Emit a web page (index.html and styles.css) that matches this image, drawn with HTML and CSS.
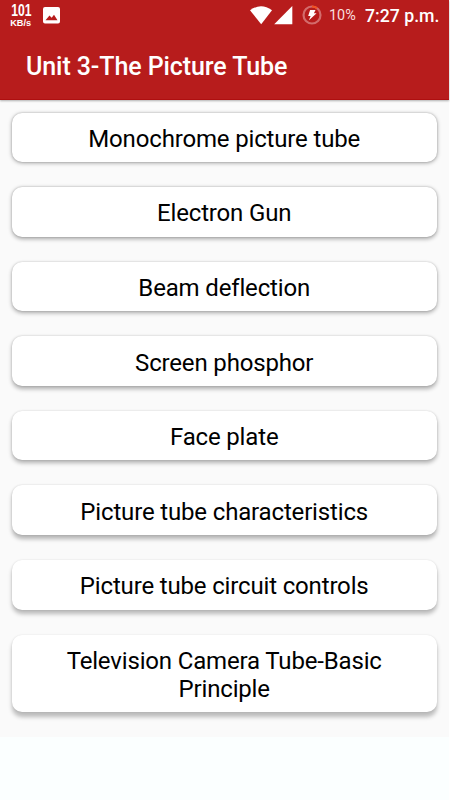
FILE: index.html
```html
<!DOCTYPE html>
<html lang="en">
  <head>
    <meta charset="utf-8">
    <meta name="viewport" content="width=device-width, initial-scale=1.0">
    <title>Unit 3-The Picture Tube</title>
    <link rel="stylesheet" href="styles.css">
  </head>

  <body>
    <div class="screen">
      <header class="header">
        <div class="status">
          <div class="speed"><b>101</b><span>KB/s</span></div>
          <svg class="photo" width="17" height="17" viewBox="0 0 17 17">
            <path fill="#fff" fill-rule="evenodd" d="M2 0h13a2 2 0 0 1 2 2v12.500a2 2 0 0 1-2 2H2a2 2 0 0 1-2-2V2a2 2 0 0 1 2-2zM2.500 13.200h12L11 7.800l-2.300 3-1-1-1.200-1.200z"/>
          </svg>
          <svg class="signal" width="44" height="20" viewBox="0 0 44 20">
            <path fill="#fff" d="M0 4.200Q11 -3.600 22 4.200L11.200 18.200z"/>
            <path fill="#fff" d="M42.300 0v18.200H24.200z"/>
          </svg>
          <svg class="battery" width="20" height="20" viewBox="0 0 20 20">
            <circle cx="10" cy="10" r="8.500" fill="none" stroke="#d36c6c" stroke-width="2.200"/>
            <path d="M10 1.500A8.500 8.500 0 0 1 15 3.100" fill="none" stroke="#f4511e" stroke-width="2.200"/>
            <path fill="#fff" d="M8.100 5h5.400l-1.600 3.300h2.700L7 15.300l1.600-4.200H6.200z"/>
          </svg>
          <span class="percent">10%</span>
          <span class="time">7:27 p.m.</span>
        </div>
        <h1 class="title">Unit 3-The Picture Tube</h1>
      </header>

      <main class="list">
        <button type="button" class="card s1">Monochrome picture tube</button>
        <button type="button" class="card s2">Electron Gun</button>
        <button type="button" class="card s3">Beam deflection</button>
        <button type="button" class="card s4">Screen phosphor</button>
        <button type="button" class="card s5">Face plate</button>
        <button type="button" class="card s6">Picture tube characteristics</button>
        <button type="button" class="card s7">Picture tube circuit controls</button>
        <button type="button" class="card tall s8">Television Camera Tube-Basic Principle</button>
      </main>
    </div>
  </body>
</html>
```

FILE: styles.css
```css
* {
  box-sizing: border-box;
}

body {
  margin: 0;
  background: #fff;
  font-family: Roboto, sans-serif;
}

.screen {
  width: 449px;
  height: 800px;
  background: #fbffff;
}

.header {
  position: relative;
  height: 100px;
  background: #b71c1c;
  color: #fff;
  border-bottom: 1px solid #ae0f10;
  box-shadow: 0 1px 2px rgba(0,0,0,0.3);
}

.status {
  display: flex;
  height: 32px;
}

.speed {
  display: flex;
  flex-direction: column;
  align-items: center;
  width: 22px;
  margin: 3px 0 0 10px;
  font-family: "Liberation Sans", sans-serif;
  font-weight: bold;
}

.speed b {
  font-size: 16px;
  line-height: 16px;
  transform: scaleX(0.76);
}

.speed span {
  margin-top: 1px;
  font-size: 8.500px;
  line-height: 7px;
  transform: scaleX(1.080);
}

.photo {
  margin: 7px 0 0 11px;
}

.signal {
  margin: 6px 0 0 190px;
}

.battery {
  margin: 5px 0 0 8px;
}

.percent {
  width: 28px;
  margin: 6px 0 0 7px;
  font-size: 14.400px;
  line-height: 20px;
  color: #f8dede;
}

.time {
  margin: 5px 0 0 8px;
  font-size: 17.700px;
  line-height: 22px;
  font-weight: 500;
  white-space: nowrap;
}

.title {
  margin: 19px 0 0 26px;
  font-size: 25px;
  line-height: 32px;
  font-weight: 500;
  letter-spacing: -0.090px;
}

.list {
  display: flex;
  flex-direction: column;
  gap: 25px;
  height: 637px;
  padding: 12.500px 12.300px 0 11.700px;
  background: #fafafa;
}

.card {
  height: 49.600px;
  padding: 3px 28px 0;
  border: none;
  border-radius: 10px;
  background: #fff;
  color: #000;
  font-family: Roboto, sans-serif;
  font-size: 24px;
  line-height: 28px;
  letter-spacing: -0.160px;
  font-variant-ligatures: common-ligatures;
  text-align: center;
  cursor: pointer;
}

.tall {
  height: 77.600px;
}

/* the shadow drops further the lower the card is */
.s1 { box-shadow: 0 1px 4px rgba(0,0,0,0.35), 0 0 2px rgba(0,0,0,0.2); }
.s2 { box-shadow: 0 1.500px 4px rgba(0,0,0,0.33), 0 0 2px rgba(0,0,0,0.2); }
.s3 { box-shadow: 0 2px 4px rgba(0,0,0,0.32), 0 0 2px rgba(0,0,0,0.18); }
.s4 { box-shadow: 0 2.500px 4px rgba(0,0,0,0.3), 0 0 2px rgba(0,0,0,0.17); }
.s5 { box-shadow: 0 3px 4px rgba(0,0,0,0.29), 0 0 2px rgba(0,0,0,0.15); }
.s6 { box-shadow: 0 3.500px 4px rgba(0,0,0,0.28), 0 0 2px rgba(0,0,0,0.14); }
.s7 { box-shadow: 0 4px 4px rgba(0,0,0,0.26), 0 0 2px rgba(0,0,0,0.12); }
.s8 { box-shadow: 0 4.500px 4px rgba(0,0,0,0.25), 0 0 2px rgba(0,0,0,0.1); }
```
